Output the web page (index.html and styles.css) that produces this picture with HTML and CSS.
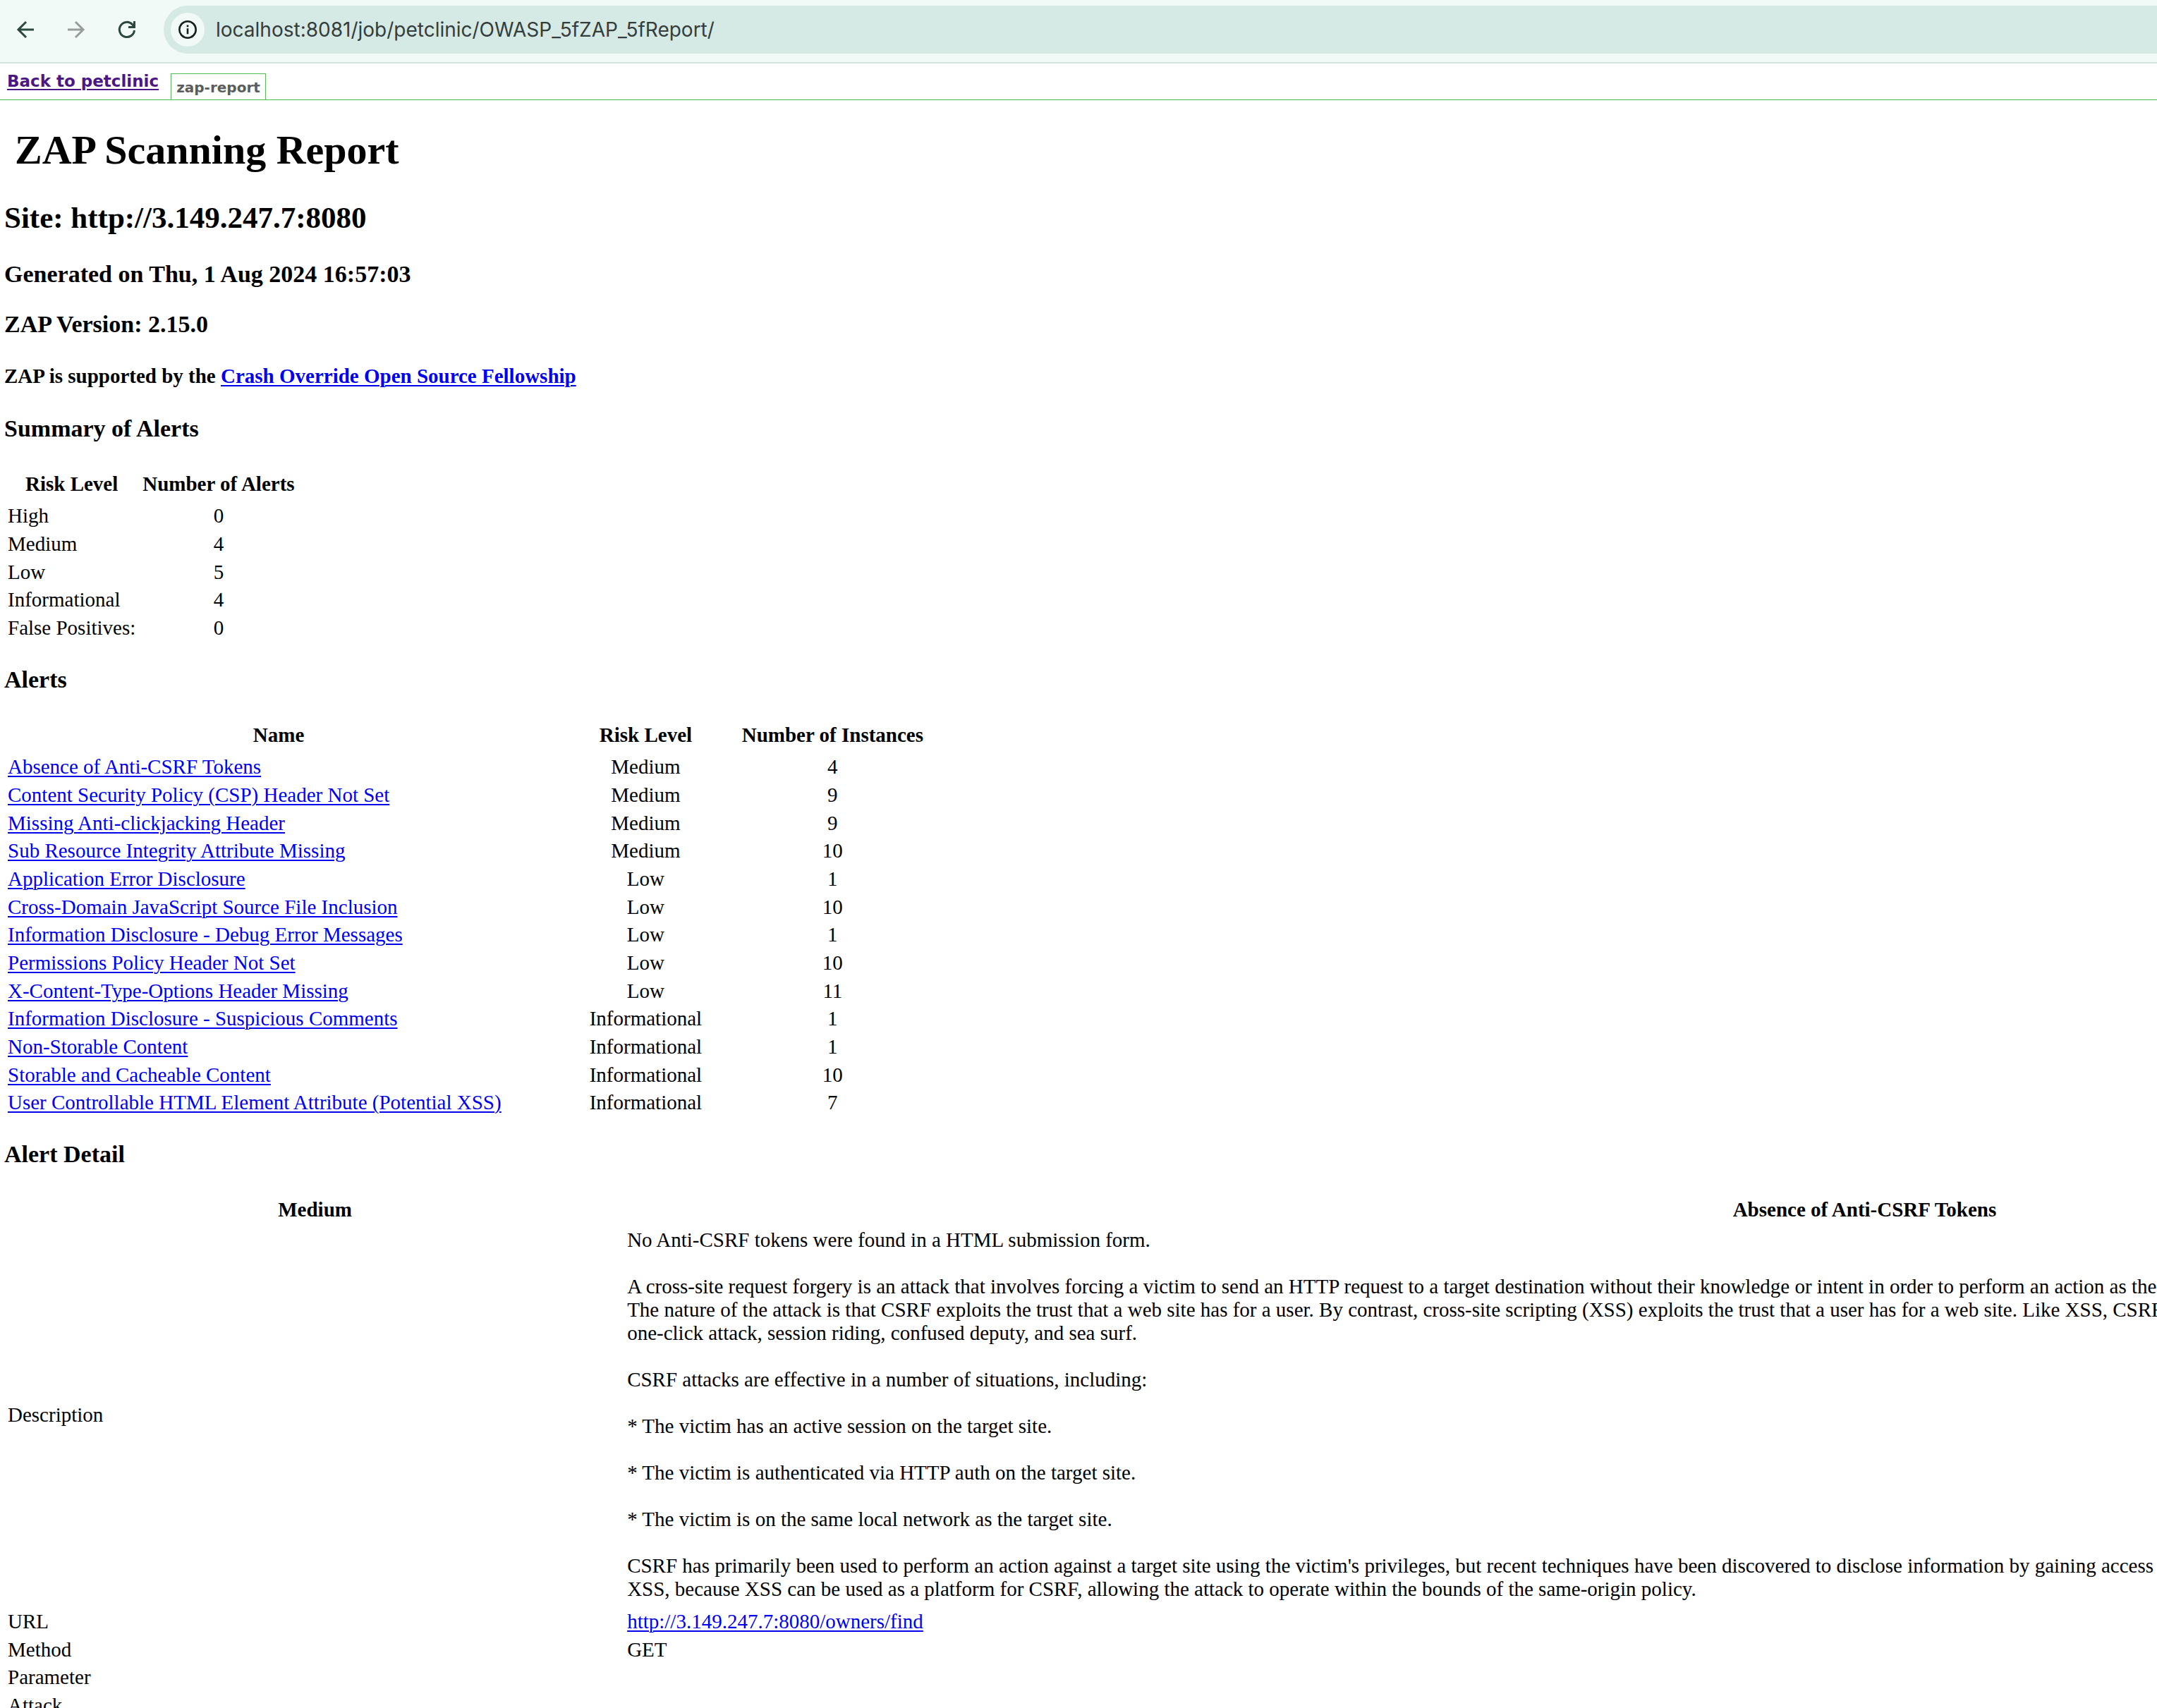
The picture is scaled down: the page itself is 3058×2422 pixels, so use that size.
FILE: index.html
```html
<!DOCTYPE html>
<html lang="en">
<head>
<meta charset="utf-8">
<title>ZAP Scanning Report</title>
<link rel="stylesheet" href="styles.css">
</head>
<body>
<header class="toolbar">
  <button class="nav-button" type="button" aria-label="Back">
    <svg viewBox="0 0 24 24"><path d="M24 12H2M13 1L2 12l11 11"/></svg>
  </button>
  <button class="nav-button nav-button-off" type="button" aria-label="Forward" disabled>
    <svg viewBox="0 0 24 24"><path d="M0 12h22M11 1l11 11-11 11"/></svg>
  </button>
  <button class="nav-button" type="button" aria-label="Reload">
    <svg viewBox="0 0 24 24"><path d="M22.500 13A10.600 10.600 0 1 1 19.500 4.500L22 7.500M22.500 0v8.600H14"/></svg>
  </button>
  <div class="address">
    <button class="site-info" type="button" aria-label="View site information">
      <svg viewBox="0 0 26 26"><circle cx="13" cy="13" r="11.700"/><path d="M13 11.300v8M13 6.600v2.600"/></svg>
    </button>
    <input class="address-input" type="text" aria-label="Address" value="localhost:8081/job/petclinic/OWASP_5fZAP_5fReport/">
  </div>
</header>
<nav class="tabs">
  <a class="back-link" href="#">Back to petclinic</a>
  <span class="tab">zap-report</span>
</nav>
<main class="report">
  <h1>ZAP Scanning Report</h1>
  <h2>Site: http://3.149.247.7:8080</h2>
  <h3>Generated on Thu, 1 Aug 2024 16:57:03</h3>
  <h3>ZAP Version: 2.15.0</h3>
  <h4>ZAP is supported by the <a href="#">Crash Override Open Source Fellowship</a></h4>

  <h3>Summary of Alerts</h3>
  <table class="summary">
    <thead><tr><th>Risk Level</th><th>Number of Alerts</th></tr></thead>
    <tbody>
      <tr><td>High</td><td class="center">0</td></tr>
      <tr><td>Medium</td><td class="center">4</td></tr>
      <tr><td>Low</td><td class="center">5</td></tr>
      <tr><td>Informational</td><td class="center">4</td></tr>
      <tr><td>False Positives:</td><td class="center">0</td></tr>
    </tbody>
  </table>

  <h3>Alerts</h3>
  <table class="alerts">
    <thead><tr><th class="name">Name</th><th class="level">Risk Level</th><th class="count">Number of Instances</th></tr></thead>
    <tbody>
      <tr><td><a href="#csrf">Absence of Anti-CSRF Tokens</a></td><td class="center">Medium</td><td class="center">4</td></tr>
      <tr><td><a href="#">Content Security Policy (CSP) Header Not Set</a></td><td class="center">Medium</td><td class="center">9</td></tr>
      <tr><td><a href="#">Missing Anti-clickjacking Header</a></td><td class="center">Medium</td><td class="center">9</td></tr>
      <tr><td><a href="#">Sub Resource Integrity Attribute Missing</a></td><td class="center">Medium</td><td class="center">10</td></tr>
      <tr><td><a href="#">Application Error Disclosure</a></td><td class="center">Low</td><td class="center">1</td></tr>
      <tr><td><a href="#">Cross-Domain JavaScript Source File Inclusion</a></td><td class="center">Low</td><td class="center">10</td></tr>
      <tr><td><a href="#">Information Disclosure - Debug Error Messages</a></td><td class="center">Low</td><td class="center">1</td></tr>
      <tr><td><a href="#">Permissions Policy Header Not Set</a></td><td class="center">Low</td><td class="center">10</td></tr>
      <tr><td><a href="#">X-Content-Type-Options Header Missing</a></td><td class="center">Low</td><td class="center">11</td></tr>
      <tr><td><a href="#">Information Disclosure - Suspicious Comments</a></td><td class="center">Informational</td><td class="center">1</td></tr>
      <tr><td><a href="#">Non-Storable Content</a></td><td class="center">Informational</td><td class="center">1</td></tr>
      <tr><td><a href="#">Storable and Cacheable Content</a></td><td class="center">Informational</td><td class="center">10</td></tr>
      <tr><td><a href="#">User Controllable HTML Element Attribute (Potential XSS)</a></td><td class="center">Informational</td><td class="center">7</td></tr>
    </tbody>
  </table>

  <h3>Alert Detail</h3>
  <table class="detail" id="csrf">
    <thead><tr><th class="key">Medium</th><th>Absence of Anti-CSRF Tokens</th></tr></thead>
    <tbody>
      <tr class="description">
        <td>Description</td>
        <td>
          <p>No Anti-CSRF tokens were found in a HTML submission form.</p>
          <p>A cross-site request forgery is an attack that involves forcing a victim to send an HTTP request to a target destination without their knowledge or intent in order to perform an action as the victim. The underlying cause is application functionality using predictable URL/form actions in a repeatable way. The nature of the attack is that CSRF exploits the trust that a web site has for a user. By contrast, cross-site scripting (XSS) exploits the trust that a user has for a web site. Like XSS, CSRF attacks are not necessarily cross-site, but they can be. Cross-site request forgery is also known as CSRF, XSRF, one-click attack, session riding, confused deputy, and sea surf.</p>
          <p>CSRF attacks are effective in a number of situations, including:</p>
          <p>* The victim has an active session on the target site.</p>
          <p>* The victim is authenticated via HTTP auth on the target site.</p>
          <p>* The victim is on the same local network as the target site.</p>
          <p>CSRF has primarily been used to perform an action against a target site using the victim's privileges, but recent techniques have been discovered to disclose information by gaining access to the response. The risk of information disclosure is dramatically increased when the target site is vulnerable to XSS, because XSS can be used as a platform for CSRF, allowing the attack to operate within the bounds of the same-origin policy.</p>
        </td>
      </tr>
      <tr><td>URL</td><td><a href="#">http://3.149.247.7:8080/owners/find</a></td></tr>
      <tr><td>Method</td><td>GET</td></tr>
      <tr><td>Parameter</td><td></td></tr>
      <tr><td>Attack</td><td></td></tr>
    </tbody>
  </table>
</main>
</body>
</html>
```
FILE: styles.css
```css
* { box-sizing: border-box; }

body {
  display: flex;
  flex-direction: column;
  height: 100vh;
  margin: 0;
  overflow: hidden;
  background: #fff;
  color: #000;
  font: 29px/33px "Liberation Serif", "Times New Roman", serif;
}

a {
  color: #0000ee;
  text-decoration-thickness: 2px;
  text-underline-offset: 3px;
}

/* Browser toolbar */
.toolbar {
  display: flex;
  flex: none;
  align-items: center;
  gap: 24px;
  padding: 8px 0 12px 12px;
  background: #f1faf6;
  border-bottom: 2px solid #d5e3df;
}

.nav-button {
  display: flex;
  align-items: center;
  justify-content: center;
  width: 48px;
  height: 48px;
  padding: 0;
  border: 0;
  background: none;
  color: #2c4740;
}

.nav-button-off { color: #979d9a; }

.nav-button svg {
  width: 24px;
  height: 24px;
  fill: none;
  stroke: currentColor;
  stroke-width: 3;
  overflow: visible;
}

.address {
  display: flex;
  flex: 1;
  align-items: center;
  gap: 16px;
  height: 68px;
  margin-left: 4px;
  padding-left: 10px;
  border-radius: 34px 0 0 34px;
  background: #d5e9e5;
}

.site-info {
  display: flex;
  align-items: center;
  justify-content: center;
  width: 48px;
  height: 48px;
  padding: 0;
  border: 0;
  border-radius: 50%;
  background: #f1faf6;
  color: #14201d;
}

.site-info svg {
  width: 26px;
  height: 26px;
  fill: none;
  stroke: currentColor;
  stroke-width: 2.600;
}

.address-input {
  flex: 1;
  min-width: 0;
  padding: 0;
  border: 0;
  background: none;
  color: #343d3b;
  font: 28px/36px Inter, Roboto, sans-serif;
}

/* Report navigation */
.tabs {
  display: flex;
  flex: none;
  align-items: flex-end;
  gap: 17px;
  padding: 14px 0 0 10px;
  border-bottom: 1px solid #52bd52;
  font-family: "DejaVu Sans", Verdana, sans-serif;
  font-weight: bold;
}

.back-link {
  align-self: flex-start;
  color: #4b1784;
  font-size: 23px;
  line-height: 22px;
}

.tab {
  padding: 7px 7px 5px;
  border: 1px solid #52bd52;
  border-bottom: 0;
  color: #5c5c5c;
  font-size: 20px;
  line-height: 24px;
}

/* Report */
.report {
  flex: 1;
  min-height: 0;
  overflow: hidden;
  padding: 38px 0 0 4px;
}

h1, h2, h3, h4 { margin: 0 0 0 2px; }

h1 {
  margin-left: 17px;
  font-size: 58px;
  line-height: 66px;
}

h2 {
  margin-top: 38px;
  margin-bottom: 35px;
  font-size: 43px;
  line-height: 50px;
}

h3 {
  margin-top: 32px;
  margin-bottom: 32px;
  font-size: 34px;
  line-height: 39px;
}

h4 {
  margin-top: 38px;
  margin-bottom: 38px;
  font-size: 29px;
  line-height: 33px;
}

table {
  border-collapse: separate;
  border-spacing: 4px;
}

th {
  padding: 7px 3px 6px;
  white-space: nowrap;
}

td { padding: 2px 3px 1px; }
tbody tr:nth-child(3n) td { padding-bottom: 0; }
.center { text-align: center; }

.alerts { width: 1312px; max-width: 100%; }
.alerts .name { width: 60%; }
.alerts .level, .alerts .count { width: 20%; }

.detail {
  width: 144%;
  table-layout: fixed;
}

.detail th { padding: 7px 3px 4px; }
.detail .key { width: 20%; }
.detail td + td { padding-left: 0; }
.description td { padding-bottom: 7px; }
.description p { margin: 0 0 33px; }
.description p:last-child { margin-bottom: 0; }
```
